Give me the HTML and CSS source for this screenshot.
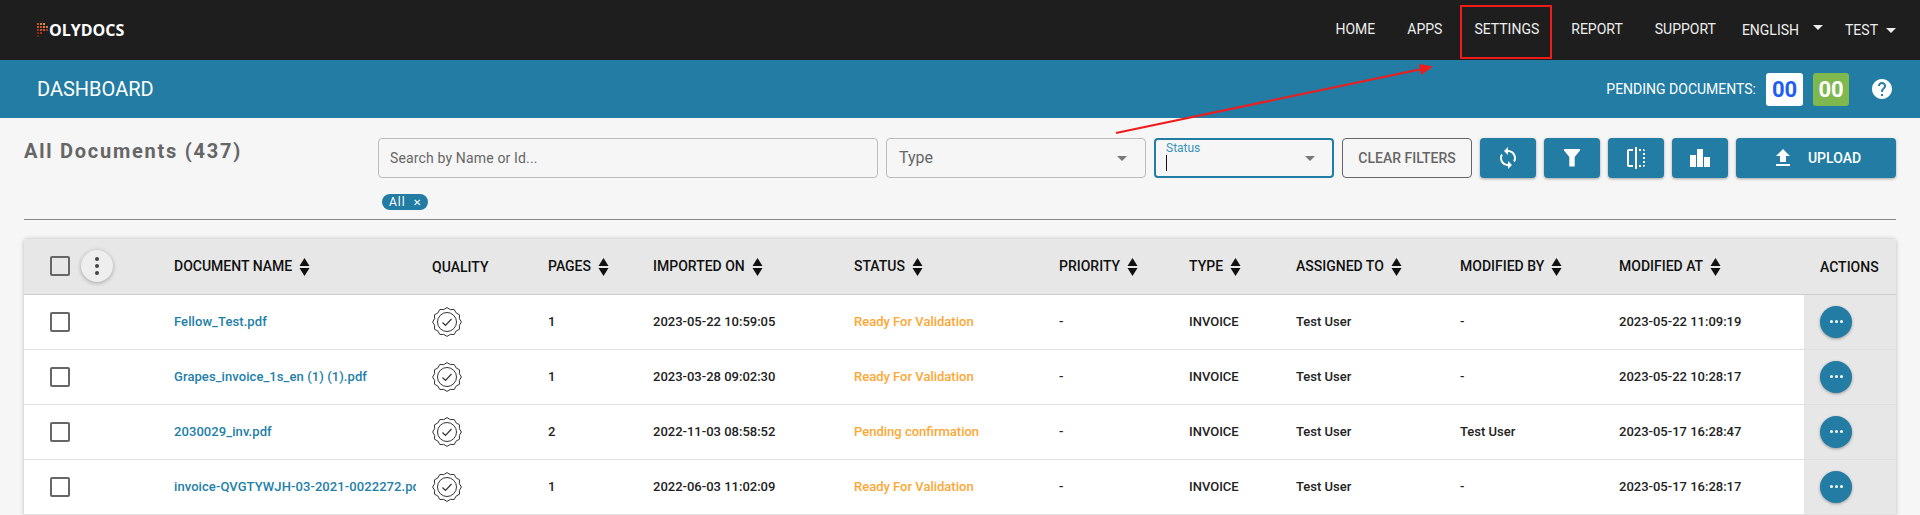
FILE: index.html
```html
<!DOCTYPE html>
<html lang="en">
<head>
	<meta charset="UTF-8">
	<title>Polydocs Dashboard</title>
	<link rel="stylesheet" href="styles.css">
</head>
<body>
	<svg width="0" height="0" class="defs">
		<symbol id="sort" viewBox="0 0 10 18"><path d="M5 0l5 8H0zM0 10h10l-5 8z"/></symbol>
		<symbol id="badge" viewBox="-15 -15 30 30">
			<path fill="none" stroke="#333" stroke-width="1" stroke-linejoin="round" d="M0-14.4L3.3-12.4 7.2-12.5 9.1-9.1 12.5-7.2 12.4-3.3 14.4 0 12.4 3.3 12.5 7.2 9.1 9.1 7.2 12.5 3.3 12.4 0 14.4-3.3 12.4-7.2 12.5-9.1 9.1-12.5 7.2-12.4 3.3-14.4 0-12.4-3.3-12.5-7.2-9.1-9.1-7.2-12.5-3.3-12.4z"/>
			<circle r="9.5" fill="none" stroke="#333" stroke-width="1"/>
			<path fill="none" stroke="#333" stroke-width="1.2" d="M-4.5 0.5L-1.5 3.5 4.5-3"/>
		</symbol>
	</svg>

	<header class="topbar">
		<div class="logo">
			<svg class="logo-mark" width="11" height="14" viewBox="0 0 11 14">
				<g fill="#c8541e">
					<rect x="0" y="0" width="2" height="2"/><rect x="3" y="0" width="2" height="2" fill="#e0803a"/><rect x="6" y="0" width="2" height="2" fill="#e0903a"/>
					<rect x="0" y="3" width="2" height="2"/><rect x="3" y="3" width="2" height="2"/><rect x="6" y="3" width="2" height="2" fill="#e0803a"/><rect x="9" y="3" width="2" height="2" fill="#d8702e"/>
					<rect x="0" y="6" width="2" height="2" fill="#a83418"/><rect x="3" y="6" width="2" height="2"/><rect x="6" y="6" width="2" height="2"/><rect x="9" y="6" width="2" height="2" fill="#a83418"/>
					<rect x="0" y="9" width="2" height="2" fill="#8c2414"/><rect x="3" y="9" width="2" height="2" fill="#a83418"/>
					<rect x="0" y="12" width="2" height="2" fill="#7a1e12"/>
				</g>
			</svg>
			<span>OLYDOCS</span>
		</div>
		<nav class="menu">
			<a class="menu-item">HOME</a>
			<a class="menu-item">APPS</a>
			<a class="menu-item menu-marked">SETTINGS</a>
			<a class="menu-item">REPORT</a>
			<a class="menu-item menu-last">SUPPORT</a>
			<a class="menu-drop menu-lang">ENGLISH<i class="drop-arrow drop-up"></i></a>
			<a class="menu-drop">TEST<i class="drop-arrow"></i></a>
		</nav>
	</header>

	<div class="subbar">
		<h1 class="subbar-title">DASHBOARD</h1>
		<div class="pending">
			<span class="pending-label">PENDING DOCUMENTS:</span>
			<span class="count count-blue">00</span>
			<span class="count count-green">00</span>
			<svg class="help" width="24" height="24" viewBox="0 0 24 24"><path fill="#fff" d="M12 2C6.48 2 2 6.48 2 12s4.48 10 10 10 10-4.48 10-10S17.52 2 12 2zm1 17h-2v-2h2v2zm2.07-7.75l-.9.92C13.45 12.9 13 13.5 13 15h-2v-.5c0-1.1.45-2.1 1.17-2.83l1.24-1.26c.37-.36.59-.86.59-1.41 0-1.1-.9-2-2-2s-2 .9-2 2H8c0-2.21 1.79-4 4-4s4 1.79 4 4c0 .88-.36 1.68-.93 2.25z"/></svg>
		</div>
	</div>

	<main class="content">
		<section class="toolbar">
			<h2 class="doc-title">All Documents (437)</h2>
			<div class="filters">
				<div class="filter-row">
					<div class="field field-search">Search by Name or Id...</div>
					<div class="field field-type">Type<i class="select-arrow"></i></div>
					<div class="field field-status">
						<span class="float-label">Status</span>
						<span class="caret"></span>
						<i class="select-arrow"></i>
					</div>
					<button class="btn-clear">CLEAR FILTERS</button>
					<button class="btn-icon"><svg width="24" height="24" viewBox="0 0 24 24"><path d="M12 4V1L8 5l4 4V6c3.31 0 6 2.69 6 6 0 1.01-.25 1.97-.7 2.8l1.46 1.46C19.54 15.03 20 13.57 20 12c0-4.42-3.58-8-8-8zm0 14c-3.31 0-6-2.69-6-6 0-1.01.25-1.97.7-2.8L5.24 7.74C4.46 8.97 4 10.43 4 12c0 4.42 3.58 8 8 8v3l4-4-4-4v3z"/></svg></button>
					<button class="btn-icon"><svg width="24" height="24" viewBox="0 0 24 24"><path d="M4 3h16v1.500L14.700 11v9.500H9.300V11L4 4.500z"/></svg></button>
					<button class="btn-icon"><svg width="24" height="24" viewBox="0 0 24 24"><path d="M15 21h2v-2h-2v2zm4-12h2V7h-2v2zM3 5v14c0 1.100.9 2 2 2h4v-2H5V5h4V3H5c-1.100 0-2 .9-2 2zm16-2v2h2c0-1.100-.9-2-2-2zm-8 20h2V1h-2v22zm8-6h2v-2h-2v2zM15 5h2V3h-2v2zm4 8h2v-2h-2v2zm0 8c1.100 0 2-.9 2-2h-2v2z"/></svg></button>
					<button class="btn-icon"><svg width="24" height="24" viewBox="0 0 24 24"><path d="M2 9h6v12H2zM9 3h6v18H9zM16 11h6v10h-6z"/></svg></button>
					<button class="btn-upload"><svg width="24" height="24" viewBox="0 0 24 24"><path d="M5 20h14v-2H5v2zm0-10h4v6h6v-6h4l-7-7-7 7z"/></svg><span>UPLOAD</span></button>
				</div>
				<span class="chip">All<span class="chip-x">&#10005;</span></span>
			</div>
		</section>
		<hr class="rule">

		<div class="table-box">
			<table class="docs">
				<colgroup>
					<col class="c-check"><col class="c-name"><col class="c-quality"><col class="c-pages"><col class="c-imported"><col class="c-status"><col class="c-priority"><col class="c-type"><col class="c-assigned"><col class="c-modby"><col class="c-modat"><col class="c-actions">
				</colgroup>
				<thead>
					<tr>
						<th><div class="head-tools"><span class="check"></span><span class="kebab"><i></i><i></i><i></i></span></div></th>
						<th>DOCUMENT NAME<svg class="sort"><use href="#sort"/></svg></th>
						<th>QUALITY</th>
						<th>PAGES<svg class="sort"><use href="#sort"/></svg></th>
						<th>IMPORTED ON<svg class="sort"><use href="#sort"/></svg></th>
						<th>STATUS<svg class="sort"><use href="#sort"/></svg></th>
						<th>PRIORITY<svg class="sort"><use href="#sort"/></svg></th>
						<th>TYPE<svg class="sort"><use href="#sort"/></svg></th>
						<th>ASSIGNED TO<svg class="sort"><use href="#sort"/></svg></th>
						<th>MODIFIED BY<svg class="sort"><use href="#sort"/></svg></th>
						<th>MODIFIED AT<svg class="sort"><use href="#sort"/></svg></th>
						<th class="cell-actions">ACTIONS</th>
					</tr>
				</thead>
				<tbody>
					<tr>
						<td><span class="check"></span></td>
						<td><div class="doc-link">Fellow_Test.pdf</div></td>
						<td><svg class="badge"><use href="#badge"/></svg></td>
						<td>1</td>
						<td>2023-05-22 10:59:05</td>
						<td class="state">Ready For Validation</td>
						<td>-</td>
						<td>INVOICE</td>
						<td>Test User</td>
						<td>-</td>
						<td>2023-05-22 11:09:19</td>
						<td class="cell-actions"><span class="more"><i></i><i></i><i></i></span></td>
					</tr>
					<tr>
						<td><span class="check"></span></td>
						<td><div class="doc-link">Grapes_invoice_1s_en (1) (1).pdf</div></td>
						<td><svg class="badge"><use href="#badge"/></svg></td>
						<td>1</td>
						<td>2023-03-28 09:02:30</td>
						<td class="state">Ready For Validation</td>
						<td>-</td>
						<td>INVOICE</td>
						<td>Test User</td>
						<td>-</td>
						<td>2023-05-22 10:28:17</td>
						<td class="cell-actions"><span class="more"><i></i><i></i><i></i></span></td>
					</tr>
					<tr>
						<td><span class="check"></span></td>
						<td><div class="doc-link">2030029_inv.pdf</div></td>
						<td><svg class="badge"><use href="#badge"/></svg></td>
						<td>2</td>
						<td>2022-11-03 08:58:52</td>
						<td class="state">Pending confirmation</td>
						<td>-</td>
						<td>INVOICE</td>
						<td>Test User</td>
						<td>Test User</td>
						<td>2023-05-17 16:28:47</td>
						<td class="cell-actions"><span class="more"><i></i><i></i><i></i></span></td>
					</tr>
					<tr>
						<td><span class="check"></span></td>
						<td><div class="doc-link">invoice-QVGTYWJH-03-2021-0022272.pdf</div></td>
						<td><svg class="badge"><use href="#badge"/></svg></td>
						<td>1</td>
						<td>2022-06-03 11:02:09</td>
						<td class="state">Ready For Validation</td>
						<td>-</td>
						<td>INVOICE</td>
						<td>Test User</td>
						<td>-</td>
						<td>2023-05-17 16:28:17</td>
						<td class="cell-actions"><span class="more"><i></i><i></i><i></i></span></td>
					</tr>
				</tbody>
			</table>
		</div>
	</main>

	<!-- red annotation arrow drawn over the page -->
	<svg class="annotation" width="1920" height="515" viewBox="0 0 1920 515">
		<path fill="none" stroke="#f01c1c" stroke-width="2" d="M1116 133L1422 69"/>
		<path fill="#f01c1c" d="M1433 66.500L1421 75 1419 64z"/>
	</svg>
</body>
</html>
```

FILE: styles.css
```css
*{margin:0; padding:0; box-sizing:border-box;}
html,body{height:515px; overflow:hidden;}
body{position:relative; background:#f6f6f6; font-family:Roboto,"Liberation Sans",sans-serif; color:#222;}
i{display:block;}
.defs{position:absolute;}

/* top bar */
.topbar{height:60px; background:#1e1e1e; display:flex; align-items:center; justify-content:space-between; padding:0 24px 0 37px;}
.logo{display:flex; align-items:center; color:#fff; font-family:"Open Sans",sans-serif; font-weight:700; font-size:16px; margin-top:-1px;}
.logo-mark{margin-right:1px;}
.menu{display:flex; align-items:center; color:#eee; font-size:14px;}
.menu-item{position:relative; margin-right:32px; margin-bottom:2px;}
.menu-last{margin-right:26px;}
.menu-marked::after{content:""; position:absolute; left:-14px; right:-13px; top:-16px; height:50px; border:2px solid #f01c1c;}
.menu-drop{display:flex; align-items:center;}
.menu-lang{margin-right:22px;}
.drop-arrow{width:0; height:0; border-left:5px solid transparent; border-right:5px solid transparent; border-top:5px solid #eee; margin-left:8px;}
.drop-up{margin-left:14px; margin-top:-5px;}

/* blue bar */
.subbar{height:58px; background:#227ca3; color:#fff; display:flex; align-items:center; justify-content:space-between; padding:0 26px 0 37px;}
.subbar-title{font-size:20px; font-weight:400;}
.pending{display:flex; align-items:center;}
.pending-label{font-size:14px; margin-right:10px;}
.count{height:33px; border-radius:3px; display:flex; align-items:center; justify-content:center; font-size:22px; font-weight:700;}
.count-blue{width:37px; background:#fff; color:#1e5ef0; margin-right:10px;}
.count-green{width:36px; background:#7fb84e; color:#fff; margin-right:21px;}

/* filters */
.content{padding:20px 24px 0;}
.toolbar{display:flex;}
.doc-title{width:354px; margin-top:1px; font-size:20px; font-weight:700; letter-spacing:1.750px; color:#666; line-height:24px;}
.filters{flex:1;}
.filter-row{display:flex; gap:8px; height:40px;}
.field{position:relative; height:40px; border:1px solid #bbb; border-radius:4px; color:#666;}
.field-search{width:500px; padding-left:11px; font-size:14px; letter-spacing:.15px; line-height:38px;}
.field-type{width:260px; padding-left:12px; font-size:16px; line-height:38px;}
.field-status{width:180px; border:2px solid #227ca3;}
.float-label{position:absolute; left:10px; top:1px; font-size:12px; line-height:14px; color:#3a94b8;}
.caret{position:absolute; left:10px; top:15px; width:1px; height:16px; background:#111;}
.select-arrow{position:absolute; right:18px; top:17px; width:0; height:0; border-left:5px solid transparent; border-right:5px solid transparent; border-top:5px solid #777;}
.field-status .select-arrow{right:17px; top:16px;}
.btn-clear{width:130px; border:1px solid #666; border-radius:4px; background:transparent; color:#666; font:500 14px Roboto,sans-serif;}
.btn-icon,.btn-upload{border:0; border-radius:4px; background:#227ca3; box-shadow:0 1px 3px rgba(0,0,0,.35); display:flex; align-items:center; justify-content:center;}
.btn-icon{width:56px;}
.btn-icon svg,.btn-upload svg{fill:#fff;}
.btn-upload{width:160px; color:#fff; font:500 14px Roboto,sans-serif; gap:13px;}
.chip{display:inline-flex; align-items:center; height:16px; margin:16px 0 0 4px; padding:0 7px; border-radius:8px; background:#227ca3; color:#fff; font-size:12px; letter-spacing:1px;}
.chip-x{font-size:10px; margin-left:7px; letter-spacing:0;}
.rule{border:0; border-top:1px solid #888; margin-top:9px;}

/* table */
.table-box{margin-top:19px; border-radius:4px 4px 0 0; box-shadow:0 0 4px rgba(0,0,0,.25); background:#fff;}
.docs{width:100%; table-layout:fixed; border-collapse:collapse; font-size:13px;}
.c-check{width:150px;} .c-name{width:258px;} .c-quality{width:116px;} .c-pages{width:105px;}
.c-imported{width:201px;} .c-status{width:205px;} .c-priority{width:130px;} .c-type{width:107px;}
.c-assigned{width:164px;} .c-modby{width:159px;} .c-modat{width:185px;} .c-actions{width:92px;}
.docs th{height:55px; padding-top:2px; background:#e7e7e7; border-bottom:1px solid #ccc; text-align:left; font-weight:500; font-size:14px; color:#111; white-space:nowrap;}
.docs td{height:55px; border-bottom:1px solid #e0e0e0; font-weight:500; color:#222; white-space:nowrap;}
.docs th:first-child,.docs td:first-child{padding-left:26px;}
.docs .cell-actions{background:#e7e7e7; padding-left:16px;}
.sort{width:11px; height:18px; margin-left:7px; vertical-align:middle; fill:#111;}
.head-tools{display:flex; align-items:center; gap:11px; margin-top:-2px;}
.check{display:block; width:20px; height:20px; border:2px solid #666; border-radius:2px;}
.kebab{width:32px; height:32px; border-radius:50%; background:#eee; box-shadow:0 1px 4px rgba(0,0,0,.3); display:flex; flex-direction:column; align-items:center; justify-content:center; gap:3px;}
.kebab i{width:4px; height:4px; border-radius:50%; background:#444;}
.doc-link{width:242px; overflow:hidden; color:#2280a8; letter-spacing:.08px;}
.badge{display:block; width:30px; height:30px;}
.state{color:#ffa733 !important;}
.more{width:32px; height:32px; border-radius:50%; background:#227ca3; box-shadow:0 1px 3px rgba(0,0,0,.35); display:flex; align-items:center; justify-content:center; gap:2px;}
.more i{width:3px; height:3px; border-radius:50%; background:#fff;}

/* annotation overlay */
.annotation{position:absolute; left:0; top:0; pointer-events:none;}
```
